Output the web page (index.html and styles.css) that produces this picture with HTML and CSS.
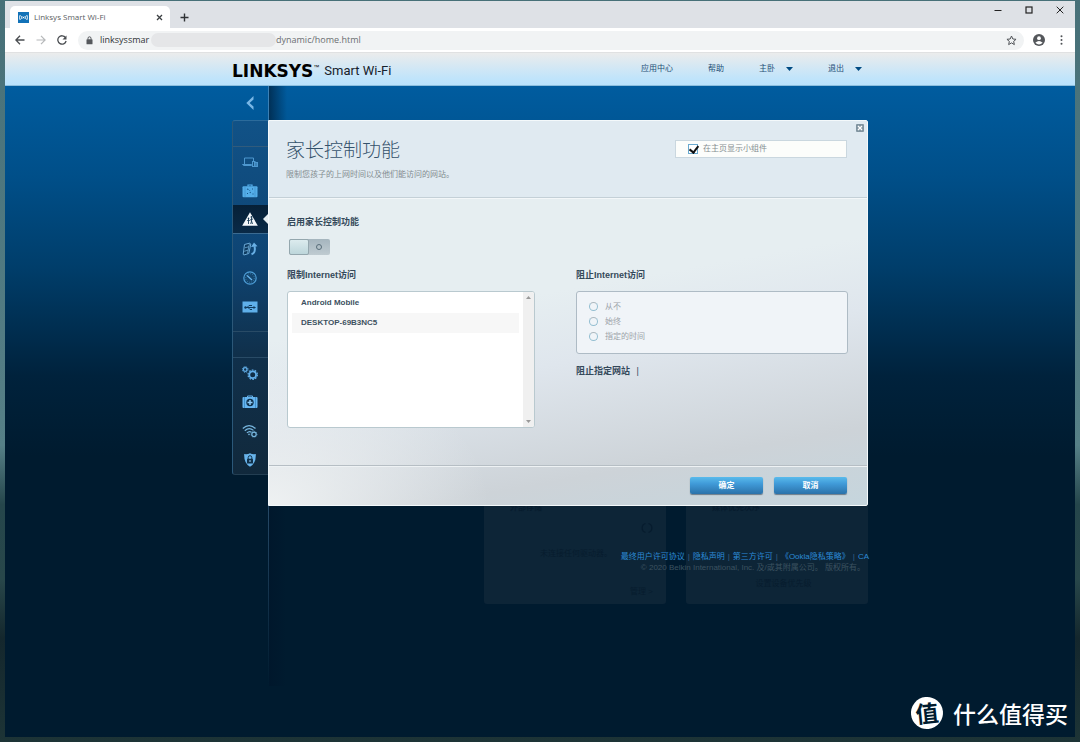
FILE: index.html
```html
<!DOCTYPE html>
<html lang="zh-CN">
<head>
<meta charset="utf-8">
<meta name="viewport" content="width=device-width, initial-scale=1">
<title>Linksys Smart Wi-Fi</title>
<link rel="stylesheet" href="styles.css">
</head>
<body>
<div class="window">
  <div class="tabstrip">
    <div class="tab">
      <svg class="favicon" viewBox="0 0 11 11" width="11" height="11"><rect width="11" height="11" fill="#1272b8"/><g fill="none" stroke="#fff" stroke-width="1"><path d="M2.2 3Q.9 5.5 2.2 8M4 4Q3.200 5.500 4 7M8.800 3Q10.100 5.500 8.800 8M7 4Q7.800 5.500 7 7"/></g><circle cx="5.500" cy="5.500" r=".8" fill="#fff"/></svg>
      <span class="tab-title">Linksys Smart Wi-Fi</span>
      <button class="icon-btn" aria-label="关闭标签页"><svg viewBox="0 0 7 7" width="7" height="7"><path d="M1 1l5 5M6 1L1 6" stroke="#3c4043" stroke-width="1.300"/></svg></button>
    </div>
    <button class="icon-btn new-tab" aria-label="新标签页"><svg viewBox="0 0 9 9" width="9" height="9"><path d="M4.500 .5v8M.5 4.500h8" stroke="#303336" stroke-width="1.400"/></svg></button>
    <div class="win-controls">
      <button class="icon-btn" aria-label="最小化"><svg viewBox="0 0 8 8" width="8" height="8"><path d="M.5 4.500h7" stroke="#222"/></svg></button>
      <button class="icon-btn" aria-label="最大化"><svg viewBox="0 0 8 8" width="8" height="8"><rect x="1" y="1" width="6" height="6" fill="none" stroke="#222" stroke-width="1.200"/></svg></button>
      <button class="icon-btn" aria-label="关闭"><svg viewBox="0 0 8 8" width="8" height="8"><path d="M.7 .7l6.600 6.600M7.300 .7L.7 7.300" stroke="#222"/></svg></button>
    </div>
  </div>
  <div class="toolbar">
    <button class="icon-btn" aria-label="后退"><svg viewBox="0 0 10 10" width="10" height="10"><path d="M9.500 5H1M5 .8L.9 5 5 9.200" fill="none" stroke="#4a4d51" stroke-width="1.300"/></svg></button>
    <button class="icon-btn" aria-label="前进"><svg viewBox="0 0 10 10" width="10" height="10"><path d="M.5 5H9M5 .8L9.100 5 5 9.200" fill="none" stroke="#b6b8ba" stroke-width="1.200"/></svg></button>
    <button class="icon-btn" aria-label="重新加载"><svg viewBox="0 0 10 10" width="10" height="10"><path d="M8.500 2.600A4.200 4.200 0 1 0 9.100 6" fill="none" stroke="#4a4d51" stroke-width="1.300"/><path d="M9.500 .5v4h-4z" fill="#4a4d51"/></svg></button>
    <div class="omnibox">
      <svg viewBox="0 0 7 9" width="7" height="9"><rect x=".5" y="3.300" width="6" height="5" rx=".6" fill="#55585c"/><path d="M2 3.500V2.300a1.500 1.500 0 0 1 3 0v1.200" fill="none" stroke="#55585c"/></svg>
      <span class="host">linksyssmar</span><span class="mask"></span><input class="path" aria-label="地址" value="dynamic/home.html">
      <button class="icon-btn" aria-label="收藏"><svg viewBox="0 0 11 11" width="11" height="11"><path d="M5.500 1l1.350 3 3.200.3-2.400 2.100.7 3.200-2.850-1.700-2.850 1.700.7-3.200L.95 4.300l3.200-.3z" fill="none" stroke="#505357"/></svg></button>
    </div>
    <button class="icon-btn" aria-label="用户"><svg viewBox="0 0 12 12" width="12" height="12"><circle cx="6" cy="6" r="6" fill="#54575b"/><circle cx="6" cy="4.200" r="1.900" fill="#fff"/><path d="M2.300 8.800Q6 5.400 9.700 8.800 6 12 2.300 8.800z" fill="#fff"/></svg></button>
    <button class="icon-btn menu" aria-label="菜单"><svg viewBox="0 0 3 10" width="3" height="10" fill="#505357"><circle cx="1.500" cy="1.200" r="1"/><circle cx="1.500" cy="5" r="1"/><circle cx="1.500" cy="8.800" r="1"/></svg></button>
  </div>

  <header class="site-header">
    <div class="container header-row">
      <div class="brand"><b class="logo">LINKSYS</b><sup class="tm">™</sup><span class="product">Smart Wi-Fi</span></div>
      <nav class="top-nav">
        <a href="#">应用中心</a>
        <a href="#">帮助</a>
        <a href="#">主卧<svg viewBox="0 0 7 4" width="7" height="4"><path d="M0 0h7L3.500 4z" fill="#004b82"/></svg></a>
        <a href="#">退出<svg viewBox="0 0 7 4" width="7" height="4"><path d="M0 0h7L3.500 4z" fill="#004b82"/></svg></a>
      </nav>
    </div>
  </header>

  <div class="app">
    <div class="container layout">
      <aside class="rail">
        <button class="icon-btn collapse" aria-label="收起"><svg viewBox="0 0 8 14" width="8" height="14"><path d="M7.500 0v3.500L3.600 7l3.900 3.500V14L.3 7z" fill="#79b7e6"/></svg></button>
        <nav class="side-nav">
          <div class="spacer"></div>
          <div class="group apps">
            <a href="#" aria-label="设备列表"><svg viewBox="0 0 16 14" width="16" height="14" fill="none" stroke="#4d97cf"><path d="M2.500 9V3h9v3M.5 9.500h9v1H1.500z"/><rect x="10.500" y="6.500" width="2.500" height="5" fill="#17507f"/><rect x="12.500" y="7.500" width="3" height="4" fill="#3a83bb"/></svg></a>
            <a href="#" aria-label="访客访问"><svg viewBox="0 0 16 14" width="16" height="14"><path d="M6 2.500V1h4v1.500" fill="none" stroke="#59b2ef" stroke-width="1.200"/><rect x=".5" y="2.300" width="15" height="11" rx="1" fill="#54aee9"/><path d="M3 2.500v10.500M13 2.500v10.500" stroke="#398bc6" stroke-width=".6"/><path d="M5 5l1.500 .5M10 5h1M5 9.500h1M8 8l.5 1M10.500 10h1M7.500 6.500h.6" stroke="#17558a" fill="none" stroke-width="1.100"/></svg></a>
            <a href="#" class="active" aria-label="家长控制"><svg viewBox="0 0 16 14" width="16" height="14"><path d="M8 .3L15.800 13.700H.2z" fill="#f4f8fb"/><circle cx="6.500" cy="6.400" r=".8" fill="#173a55"/><circle cx="9.500" cy="5" r=".9" fill="#173a55"/><path d="M6.500 7v5M5.200 8.500l2.600 0M9.500 6v3.200L8.700 12M9.500 9l1 3M8 8l3-1" stroke="#173a55" fill="none" stroke-width=".9"/></svg></a>
            <a href="#" aria-label="媒体优先"><svg viewBox="0 0 16 14" width="16" height="14"><path d="M2.500 2.500l5-1.300 1.300.8-2 9.500-5 1.500-.6-.8z" fill="#0f3b60" stroke="#6ba9d6"/><path d="M2.800 5.800L7 4.700M2.200 9.300l4-1.200M7.500 1.500l-2 10" stroke="#6ba9d6" stroke-width=".8"/><path d="M9.500 12.300q4.500-1.500 3-8" fill="none" stroke="#69b0e5" stroke-width="2"/><path d="M9 5l3-4.500 3.500 3.800z" fill="#69b0e5"/></svg></a>
            <a href="#" aria-label="速度测试"><svg viewBox="0 0 16 14" width="16" height="14"><circle cx="8" cy="7" r="6.200" fill="#14456d" stroke="#4d9dd6" stroke-width="1.200"/><circle cx="8" cy="7" r="4.300" fill="none" stroke="#3b86bb" stroke-width=".8" stroke-dasharray="1 1.200"/><path d="M5 4.500l5 4.500" stroke="#67b5ef" stroke-width="1.300"/></svg></a>
            <a href="#" aria-label="外部存储"><svg viewBox="0 0 16 14" width="16" height="14"><rect x=".5" y="1.500" width="15" height="11" fill="#5fafe9"/><path d="M3 7.500h9M5 7.500L7 5.500h3M6 7.500l2 2h2" stroke="#103a5c" fill="none"/><circle cx="3.500" cy="7.500" r="1.200" fill="#103a5c"/><path d="M11.500 6l2.500 1.500-2.500 1.500z" fill="#103a5c"/></svg></a>
          </div>
          <div class="spacer"></div>
          <div class="group settings">
            <a href="#" aria-label="连接"><svg viewBox="0 0 16 14" width="16" height="14" fill="none" stroke="#63b0eb"><circle cx="3.200" cy="3.500" r="1.800" stroke-width="1.200"/><circle cx="3.200" cy="3.500" r="2.800" stroke-dasharray="1.200 1"/><circle cx="10.700" cy="8.700" r="3.400" stroke-width="1.800"/><circle cx="10.700" cy="8.700" r="4.700" stroke-dasharray="1.700 1.250" stroke-width="1.200"/></svg></a>
            <a href="#" aria-label="故障排除"><svg viewBox="0 0 16 14" width="16" height="14"><path d="M5.500 2.500V1h5v1.500" fill="none" stroke="#66b5f0"/><rect x=".5" y="2" width="15" height="11" rx="1" fill="#66b5f0"/><path d="M2.500 2v11M13.500 2v11" stroke="#317eb8" stroke-width=".7"/><circle cx="8" cy="7.500" r="3.700" fill="#0f304b"/><path d="M8 5v5M5.500 7.500h5" stroke="#8ccaf7" stroke-width="1.500"/></svg></a>
            <a href="#" aria-label="无线"><svg viewBox="0 0 16 14" width="16" height="14" fill="none" stroke="#78b7df" stroke-width="1.200"><path d="M.8 4.500Q7 -1.200 13.500 4.500M2.800 6.800Q7 2.700 11.500 6.400M4.900 8.900Q7.300 6.600 9.500 8.300"/><circle cx="7" cy="10.400" r=".8" fill="#78b7df" stroke="none"/><circle cx="12" cy="10.300" r="2.200"/><circle cx="12" cy="10.300" r="3" stroke-width=".7" stroke-dasharray="1 1"/></svg></a>
            <a href="#" aria-label="安全"><svg viewBox="0 0 16 14" width="16" height="14"><path d="M2.200 1Q5.500 1.500 8 .3q2.500 1.200 5.800.7 .5 9.500-5.800 12.800Q1.700 10.500 2.200 1z" fill="#68b4eb"/><rect x="5" y="5.700" width="6" height="4.700" rx=".5" fill="#10314b"/><path d="M6.200 6V4.500a1.800 1.800 0 0 1 3.600 0V6" fill="none" stroke="#10314b"/><path d="M8 7v2" stroke="#9ad1f8"/></svg></a>
          </div>
        </nav>
      </aside>

      <div class="stage">
        <main class="dialog">
          <div class="dialog-head">
            <div class="intro">
              <h1>家长控制功能</h1>
              <p>限制您孩子的上网时间以及他们能访问的网站。</p>
            </div>
            <label class="widget-toggle"><input type="checkbox" checked>在主页显示小组件</label>
            <button class="icon-btn close" aria-label="关闭对话框"><svg viewBox="0 0 8 8" width="8" height="8"><rect width="8" height="8" rx="1" fill="#8194a0"/><path d="M2 2l4 4M6 2L2 6" stroke="#fff" stroke-width="1.300"/></svg></button>
          </div>
          <div class="dialog-body">
            <h2 id="enable">启用家长控制功能</h2>
            <button class="switch" role="switch" aria-checked="false" aria-labelledby="enable"><span class="knob"></span><span class="off"></span></button>
            <div class="columns">
              <section>
                <h2>限制Internet访问</h2>
                <div class="device-box">
                  <ul class="devices"><li>Android Mobile</li><li>DESKTOP-69B3NC5</li></ul>
                  <div class="scrollbar"><svg viewBox="0 0 5 3" width="5" height="3"><path d="M0 3h5L2.500 0z" fill="#999"/></svg><svg viewBox="0 0 5 3" width="5" height="3"><path d="M0 0h5L2.500 3z" fill="#999"/></svg></div>
                </div>
              </section>
              <section>
                <h2>阻止Internet访问</h2>
                <div class="options">
                  <label><input type="radio" name="block" disabled>从不</label>
                  <label><input type="radio" name="block" disabled>始终</label>
                  <label><input type="radio" name="block" disabled>指定的时间</label>
                </div>
                <h2>阻止指定网站 <span class="bar">|</span></h2>
              </section>
            </div>
          </div>
          <div class="dialog-foot">
            <button class="action">确定</button>
            <button class="action">取消</button>
          </div>
        </main>
        <div class="below">
          <div class="cards">
            <section class="card"><h3>外部存储</h3><svg class="refresh" viewBox="0 0 12 12" width="12" height="12"><path d="M4.500 1.500a4.700 4.700 0 0 0 0 9M7.500 1.500a4.700 4.700 0 0 1 0 9" fill="none" stroke="#071c2e" stroke-width="1.300"/></svg><p>未连接任何驱动器。</p><p class="more">管理 &gt;</p></section>
            <section class="card"><h3>媒体优先次序</h3><p class="center">设置设备优先级</p></section>
          </div>
          <footer class="legal">
            <div class="links"><a href="#">最终用户许可协议</a><i>|</i><a href="#">隐私声明</a><i>|</i><a href="#">第三方许可</a><i>|</i><a href="#">《Ookla隐私策略》</a><i>|</i><a href="#">CA</a></div>
            <p>© 2020 Belkin International, Inc. 及/或其附属公司。 版权所有。</p>
          </footer>
        </div>
      </div>
    </div>
    <div class="watermark"><span class="seal">值</span><span>什么值得买</span></div>
  </div>
</div>
</body>
</html>
```
FILE: styles.css
```css
* { box-sizing: border-box; }
body {
  margin: 0;
  padding: 1px 5px 5px;
  min-height: 100vh;
  display: flex;
  background: linear-gradient(#477078, #568087 60%, #25464b 68%, #28474a 78%, #14272d 86%, #1d3436);
  font-family: "Liberation Sans", "Noto Sans CJK SC", sans-serif;
  font-size: 8px;
  line-height: 12px;
}
h1, h2, h3, p, ul { margin: 0; padding: 0; }
ul { list-style: none; }
a { color: inherit; text-decoration: none; }
button, input { font: inherit; }
svg { display: block; flex: none; }
.icon-btn { padding: 0; border: 0; background: none; display: flex; align-items: center; justify-content: center; }
.window { flex: 1; display: flex; flex-direction: column; min-width: 0; }

/* browser chrome */
.tabstrip { display: flex; align-items: center; height: 27px; padding: 5px 11px 0 5px; background: #dee1e6; }
.tab { display: flex; align-items: center; align-self: stretch; width: 160px; padding: 0 7px 0 8px; gap: 5px; background: #fff; border-radius: 5px 5px 0 0; }
.tab-title { flex: 1; font-family: "Open Sans", sans-serif; color: #5a5d61; }
.new-tab { margin-left: 10px; }
.win-controls { display: flex; gap: 23px; margin-left: auto; align-self: flex-start; }
.toolbar { display: flex; align-items: center; gap: 11px; height: 25px; padding: 0 12px 0 10px; background: #fff; border-bottom: 1px solid #e0e1e2; }
.omnibox { flex: 1; display: flex; align-items: center; height: 19px; margin-right: -2px; padding: 0 7px 0 8px; border-radius: 10px; background: #f1f3f4; font-family: "Open Sans", sans-serif; font-size: 9px; min-width: 0; }
.host { width: 58px; padding-left: 7px; color: #303336; }
.mask { width: 125px; height: 14px; border-radius: 7px; background: #e5e6e8; }
.path { flex: 1; min-width: 0; padding: 0; border: 0; background: none; color: #6b6e72; }
.menu { margin-left: 4px; }

/* site header */
.container { width: 100%; max-width: 656px; margin: 0 auto; padding-left: 20px; }
.site-header { background: linear-gradient(#ebecec, #c0e4fb 80%, #b9e2fd); border-bottom: 1px solid #8cbede; }
.header-row { display: flex; align-items: center; justify-content: space-between; height: 32px; padding-right: 6px; }
.brand { display: flex; align-items: center; color: #000; padding-top: 4px; }
.logo { font-family: "DejaVu Sans", sans-serif; font-size: 17px; line-height: 16px; }
.tm { font-size: 6px; line-height: 16px; align-self: flex-start; margin-top: -4px; }
.product { margin-left: 5px; font-family: Roboto, sans-serif; font-size: 13px; line-height: 16px; color: #17222b; }
.top-nav { display: flex; gap: 35px; color: #1d4f76; }
.top-nav a { display: flex; align-items: center; gap: 11px; }

/* application */
.app { position: relative; flex: 1; background: linear-gradient(#005c9f, #004f89 90px, #003e6b 180px, #00223c 290px, #001b2f 370px); }
.layout { display: flex; }
.rail { width: 37px; min-height: 600px; padding-right: 1px; background: linear-gradient(#3c82b8, #33597a 60%, transparent) right / 1px 100% no-repeat; }
.collapse { width: 35px; height: 34px; }
.side-nav { border: 1px solid #2b618b; border-color: #2c6b9b #2a4960 #233e52 #2b5879; border-right: 0; border-radius: 3px 0 0 3px; background: linear-gradient(#115287, #0e4473 40%, #10304b 66%, #11293c); }
.spacer { height: 25px; }
.group { border-top: 1px solid #315b7c; }
.apps { padding-bottom: 10px; border-bottom: 1px solid #294b66; }
.settings { border-top-color: #294b66; }
.group a { display: flex; align-items: center; justify-content: center; height: 29px; padding-right: 2px; }
.group .active { position: relative; background: linear-gradient(#062037, #0a2a47); border-bottom: 1px solid #3b6b91; }
.active::after { content: ""; position: absolute; right: 0; border: 5px solid transparent; border-right-color: #e5edf0; border-left: 0; }
.stage { flex: 1; min-width: 0; padding-top: 34px; margin-left: -1px; background: linear-gradient(90deg, #00152a99, transparent) 1px 0 / 18px 100% no-repeat; }
.dialog { position: relative; z-index: 1; border: 1px solid #f4f9fb; border-radius: 0 2px 2px 0; background: radial-gradient(220px 150px at 0 100%, #eef1f2, #e6ebee00), linear-gradient(170deg, #e6eef1 45%, #dfe6ed 60%, #cdd3d8 84%, #c5d5dd); }
.dialog-head { position: relative; display: flex; align-items: flex-start; justify-content: space-between; height: 77px; padding: 15px 20px 0 17px; background: #e0eaf1; border-bottom: 1px solid #c4d0d7; }
h1 { font-size: 19px; line-height: 30px; font-weight: 300; color: #34526b; }
.intro p { margin-top: 3px; color: #838c90; }
.widget-toggle { display: flex; align-items: center; gap: 5px; width: 172px; height: 18px; margin-top: 4px; padding-left: 12px; border: 1px solid #cad7df; background: #fcfdfb; color: #858e91; }
.widget-toggle input { appearance: none; width: 10px; height: 10px; margin: 0; border: 1px solid #69a9cf; background: #fff; display: flex; }
.widget-toggle input:checked::before { content: ""; width: 4px; height: 7px; margin: -1px 0 0 2px; border: solid #111; border-width: 0 2px 2px 0; transform: rotate(38deg); }
.close { position: absolute; top: 3px; right: 3px; }
.dialog-body { padding: 16px 19px 37px 18px; border-top: 1px solid #f3f7f9; border-bottom: 1px solid #b6bec4; }
h2 { font-size: 9px; line-height: 14px; color: #34495a; }
.switch { display: flex; width: 41px; height: 16px; margin: 10px 0 13px 2px; padding: 0; border: 0; border-radius: 2px; background: linear-gradient(#a5b5be, #bfcbd1); }
.knob { width: 20px; height: 16px; border: 1px solid #94a7ae; border-radius: 2px; background: linear-gradient(#dcebee, #bdd6db); }
.off { width: 6px; height: 6px; margin: 5px 7px; border: 1px solid #586d79; border-radius: 50%; }
.columns { display: grid; grid-template-columns: 248px 272px; justify-content: space-between; }
.device-box { display: flex; height: 137px; margin-top: 9px; border: 1px solid #b9c9cf; border-radius: 3px; background: #fff; overflow: hidden; }
.devices { flex: 1; padding: 1px 4px; font-weight: bold; color: #3d515f; }
.devices li { padding: 4px 9px; }
.devices li:nth-child(2) { background: #f7f7f7; }
.scrollbar { width: 11px; display: flex; flex-direction: column; align-items: center; justify-content: space-between; padding: 4px 0; background: #f0f0f0; }
.options { margin: 9px 0 10px; padding: 7px 12px 9px; border: 1px solid #aebbc5; border-radius: 3px; background: #f0f4f8; }
.options label { display: flex; align-items: center; gap: 7px; height: 15px; color: #9ca3a9; }
.options input { appearance: none; width: 9px; height: 9px; margin: 0; border: 1px solid #94bed1; border-top-color: #adb8bf; border-radius: 50%; }
.bar { margin-left: 4px; font-weight: normal; }
.dialog-foot { display: flex; justify-content: flex-end; gap: 11px; padding: 10px 20px 11px; border-top: 1px solid #eef2f4; }
.action { width: 73px; height: 17px; padding: 0; border: 0; border-radius: 2px; color: #fff; font-weight: bold; background: linear-gradient(#59bbec, #409ad8 40%, #2b72aa); box-shadow: 0 1px 1px #6c7c89; }

/* home page behind the dialog */
.below { display: grid; margin-top: -6px; }
.below > * { grid-area: 1 / 1; }
.cards { display: grid; grid-template-columns: 182px 182px; justify-content: end; gap: 20px; }
.card { display: flex; flex-direction: column; height: 104px; padding: 2px 13px 6px 26px; border-radius: 0 0 3px 3px; background: #0d2537; color: #071c2e; }
h3 { font-size: 8px; line-height: 12px; }
.refresh { align-self: flex-end; margin-top: 8px; }
.card p { margin-top: 14px; padding-left: 30px; }
.card .more { margin-top: auto; text-align: right; }
.card .center { margin-top: 64px; padding: 0; text-align: center; }
.legal { margin-top: 51px; text-align: right; line-height: 11px; color: #3c5260; }
.links { color: #2c8bd6; margin-right: -1px; white-space: nowrap; }
.links i { margin: 0 3px; font-style: normal; color: #386487; }
.legal p { margin-right: 3px; }
.watermark { position: absolute; right: 7px; bottom: 8px; display: flex; align-items: center; gap: 10px; color: #fff; font: 500 23px/32px "Noto Sans CJK SC", sans-serif; }
.seal { width: 32px; height: 32px; border-radius: 50%; background: #fff; color: #001b2f; text-align: center; font-weight: bold; line-height: 31px; transform: rotate(-6deg); }
```
